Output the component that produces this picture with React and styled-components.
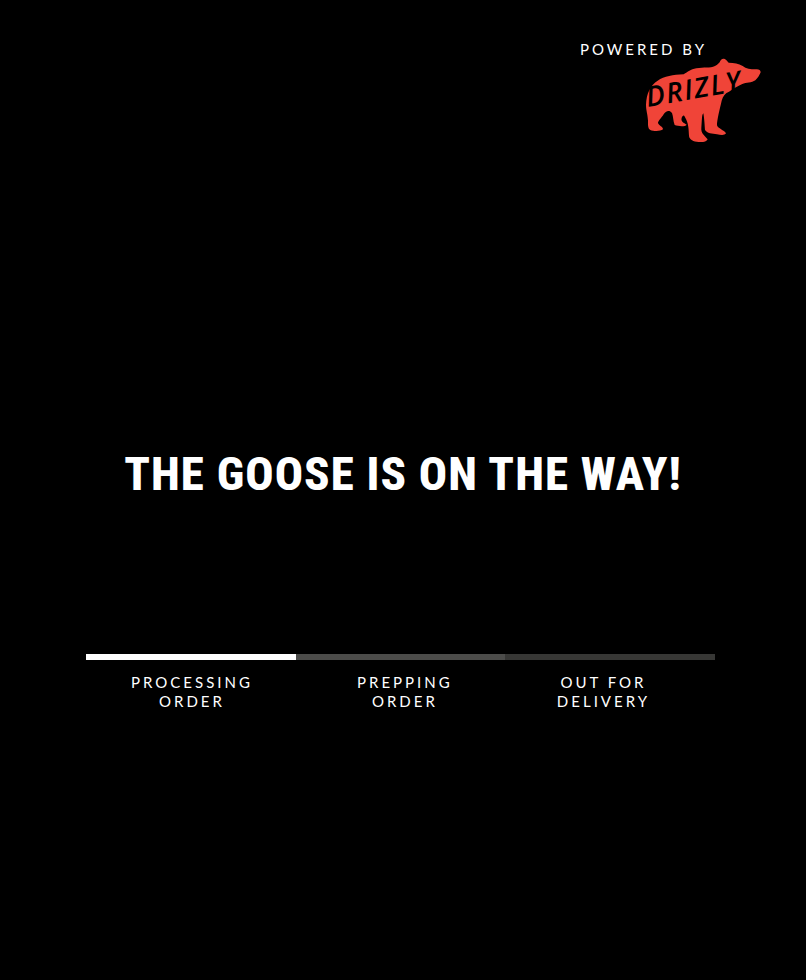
import React from "react";
import styled, { createGlobalStyle } from "styled-components";

const GlobalStyle = createGlobalStyle`
  * { box-sizing: border-box; }
  body { margin: 0; background: #000; color: #fff; }
`;

const Page = styled.main`
  display: flex;
  flex-direction: column;
  min-height: 100vh;
  background: #000;
  font-family: Lato, "Open Sans", sans-serif;
`;

const Sponsor = styled.header`
  display: flex;
  flex-direction: column;
  align-items: flex-end;
  padding: 40px 45px 0 0;
`;

const SponsorLabel = styled.p`
  margin: 0 54px 0 0;
  font-size: 15px;
  line-height: 18px;
  letter-spacing: 3px;
`;

const BearLogo = styled.svg`
  display: block;
  width: 116px;
  height: 85px;
  overflow: visible;
`;

const LogoName = styled.text`
  font-family: "Open Sans", "Noto Sans", sans-serif;
  font-size: 84px;
  font-style: italic;
  font-weight: 600;
  letter-spacing: 5px;
`;

const Headline = styled.h1`
  margin: 301px 0 0;
  text-align: center;
  font-family: "Roboto Condensed", "Liberation Sans Narrow", sans-serif;
  font-size: 47px;
  line-height: 60px;
  font-weight: 800;
  letter-spacing: 1px;
`;

const Progress = styled.section`
  margin: 150px 91px 0 86px;
`;

const Track = styled.div`
  display: grid;
  grid-template-columns: repeat(3, 1fr);
  height: 6px;
`;

const tones = { done: "#fff", next: "#4c4c4a", later: "#373735" };

const Segment = styled.span`
  background: ${({ $tone }) => tones[$tone]};
`;

const Steps = styled.ol`
  display: flex;
  justify-content: space-between;
  margin: 13px 0 0;
  padding: 0 65px 0 45px;
  list-style: none;
`;

const Step = styled.li`
  width: min-content;
  text-align: center;
  font-size: 15px;
  line-height: 19px;
  letter-spacing: 3px;
`;

const Phrase = styled.span`
  display: block;
  white-space: nowrap;
`;

const steps = [
  { tone: "done", lines: ["PROCESSING", "ORDER"] },
  { tone: "next", lines: ["PREPPING", "ORDER"] },
  { tone: "later", lines: ["OUT FOR", "DELIVERY"] },
];

export default function App() {
  return (
    <Page>
      <GlobalStyle />
      <Sponsor>
        <SponsorLabel>POWERED BY</SponsorLabel>
        <BearLogo viewBox="225 70 348 255" role="img" aria-label="Drizly">
          <path
            fill="#f04438"
            d="M228 210 C229 176 242 151 263 138 C283 124 309 121 341 119 C354 112 361 104 379 101 C402 97 420 101 435 94 C443 90 446 86 449 83 C451 75 458 70 464 73 C470 75 472 81 476 84 C492 84 506 87 518 94 C528 102 542 104 556 104 C565 102 572 106 572 113 C568 123 563 131 556 137 C545 145 528 143 517 148 C502 154 491 163 477 171 C466 175 459 184 455 198 C449 225 441 255 441 272 C444 282 462 286 468 296 C464 303 452 301 441 299 C427 297 411 296 405 286 C404 274 403 252 400 236 C395 239 396 260 394 279 C392 297 406 304 413 314 C410 322 397 323 386 322 C370 321 359 316 357 304 C356 285 356 266 345 248 C342 240 339 242 335 249 C332 262 341 263 350 270 C345 277 325 275 314 271 C309 258 310 245 306 235 C299 225 287 228 281 239 C276 248 264 259 264 265 C267 274 279 275 279 284 C271 291 250 290 241 286 C233 281 234 268 234 258 C233 238 228 227 228 210 Z"
          />
          <LogoName transform="translate(233 217) rotate(-10)">DRIZLY</LogoName>
        </BearLogo>
      </Sponsor>
      <Headline>THE GOOSE IS ON THE WAY!</Headline>
      <Progress aria-label="Order progress">
        <Track>
          {steps.map(({ tone }) => (
            <Segment key={tone} $tone={tone} />
          ))}
        </Track>
        <Steps>
          {steps.map(({ tone, lines }) => (
            <Step key={tone} aria-current={tone === "done" ? "step" : undefined}>
              {lines.map((line) => (
                <Phrase key={line}>{line}</Phrase>
              ))}
            </Step>
          ))}
        </Steps>
      </Progress>
    </Page>
  );
}
